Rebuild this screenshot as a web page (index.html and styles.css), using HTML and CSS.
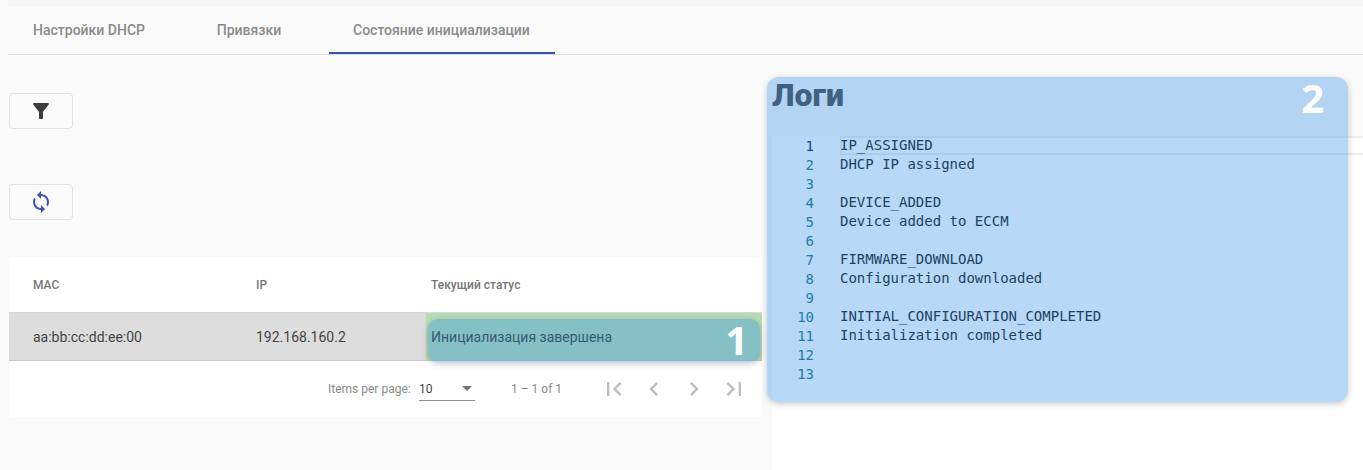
FILE: index.html
```html
<!DOCTYPE html>
<html lang="ru">
<head>
<meta charset="utf-8">
<title>DHCP</title>
<link rel="stylesheet" href="styles.css">
</head>
<body>
<div class="page">
  <div class="topstrip"></div>
  <nav class="tabs">
    <a class="tab">Настройки DHCP</a>
    <a class="tab">Привязки</a>
    <a class="tab tab-active">Состояние инициализации</a>
  </nav>
  <div class="content">
    <section class="left">
      <button class="icon-btn btn-first">
        <svg class="mi" viewBox="0 0 24 24"><path fill="#3d3d3d" d="M4.25 5.61C6.27 8.2 10 13 10 13v6c0 .55.45 1 1 1h2c.55 0 1-.45 1-1v-6s3.72-4.8 5.74-7.39c.51-.66.04-1.61-.79-1.61H5.04c-.83 0-1.3.95-.79 1.61z"/></svg>
      </button>
      <button class="icon-btn btn-second">
        <svg class="mi" viewBox="0 0 24 24"><path fill="#3f51b5" d="M12 4V1L8 5l4 4V6c3.31 0 6 2.69 6 6 0 1.01-.25 1.97-.7 2.8l1.46 1.46C19.54 15.03 20 13.57 20 12c0-4.42-3.58-8-8-8zm0 14c-3.31 0-6-2.69-6-6 0-1.01.25-1.97.7-2.8L5.24 7.74C4.46 8.97 4 10.43 4 12c0 4.42 3.58 8 8 8v3l4-4-4-4v3z"/></svg>
      </button>
      <div class="table-card">
        <div class="row head">
          <div class="cell c1">MAC</div>
          <div class="cell c2">IP</div>
          <div class="cell c3">Текущий статус</div>
        </div>
        <div class="row body">
          <div class="cell c1">aa:bb:cc:dd:ee:00</div>
          <div class="cell c2">192.168.160.2</div>
          <div class="cell c3 status">Инициализация завершена</div>
        </div>
        <div class="paginator">
          <span class="per-label">Items per page:</span>
          <span class="per-select"><span>10</span><i class="caret"></i></span>
          <span class="range">1 – 1 of 1</span>
          <span class="pg-btn"><svg viewBox="0 0 24 24"><path d="M18.41 16.59L13.82 12l4.59-4.59L17 6l-6 6 6 6zM6 6h2v12H6z"/></svg></span>
          <span class="pg-btn"><svg viewBox="0 0 24 24"><path d="M15.41 7.41L14 6l-6 6 6 6 1.41-1.41L10.83 12z"/></svg></span>
          <span class="pg-btn"><svg viewBox="0 0 24 24"><path d="M10 6L8.59 7.41 13.17 12l-4.58 4.59L10 18l6-6z"/></svg></span>
          <span class="pg-btn"><svg viewBox="0 0 24 24"><path d="M5.59 7.41L10.18 12l-4.59 4.59L7 18l6-6-6-6zM16 6h2v12h-2z"/></svg></span>
        </div>
      </div>
    </section>
    <section class="right">
      <h2 class="logs-title">Логи</h2>
      <div class="editor">
        <div class="gutter">
          <div>1</div><div>2</div><div>3</div><div>4</div><div>5</div><div>6</div><div>7</div><div>8</div><div>9</div><div>10</div><div>11</div><div>12</div><div>13</div>
        </div>
        <div class="code">
          <div class="line current">IP_ASSIGNED</div>
          <div class="line">DHCP IP assigned</div>
          <div class="line"></div>
          <div class="line">DEVICE_ADDED</div>
          <div class="line">Device added to ECCM</div>
          <div class="line"></div>
          <div class="line">FIRMWARE_DOWNLOAD</div>
          <div class="line">Configuration downloaded</div>
          <div class="line"></div>
          <div class="line">INITIAL_CONFIGURATION_COMPLETED</div>
          <div class="line">Initialization completed</div>
        </div>
      </div>
    </section>
  </div>
  <div class="callout callout-one"><span class="callout-num">1</span></div>
  <div class="callout callout-two"><span class="callout-num">2</span></div>
</div>
</body>
</html>
```
FILE: styles.css
```css
* { box-sizing: border-box; }
html, body { margin: 0; height: 100%; }
body { background: #fafafa; font-family: Roboto, "Liberation Sans", sans-serif; overflow: hidden; }
.page { position: relative; height: 470px; padding-left: 8px; }
.topstrip { height: 6px; background: #f5f5f5; }
.tabs { display: flex; height: 49px; border-bottom: 1px solid #dcdcdc; padding-left: 1px; }
.tab { min-width: 160px; padding: 0 24px; height: 48px; display: flex; align-items: center; justify-content: center; font-size: 14px; font-weight: 500; color: #8a8a8a; }
.tab-active { border-bottom: 2px solid #3f51b5; padding: 2px 25px 0 24px; }
.content { display: flex; height: 415px; margin-left: -8px; }
.left { width: 772px; flex: none; padding: 38px 10px 0 9px; }
.icon-btn { display: flex; align-items: center; justify-content: center; width: 64px; height: 36px; border: 1px solid #e0e0e0; border-radius: 4px; background: transparent; padding: 0; }
.btn-second { margin-top: 55px; }
.mi { width: 24px; height: 24px; }
.table-card { margin-top: 37px; background: #fff; }
.row { display: grid; grid-template-columns: 223px 194px 1fr; }
.head { height: 55px; font-size: 12px; font-weight: 500; color: #777; padding-top: 1px; }
.body { height: 49px; background: #ddd; border-top: 1px solid #d8d8d8; border-bottom: 1px solid #c6c6c6; font-size: 14px; color: #444; }
.cell { display: flex; align-items: center; padding-left: 24px; }
.c3 { padding-left: 5px; }
.head .c3 { padding-left: 22px; margin-left: -17px; }
.status { background: #b5dcb5; margin-left: 0; }
.paginator { height: 56px; display: flex; align-items: center; font-size: 12px; color: #8a8a8a; padding-left: 319px; }
.per-label { width: 83px; }
.per-select { margin-left: 8px; width: 56px; height: 24px; display: flex; align-items: center; justify-content: space-between; padding-right: 3px; border-bottom: 1px solid #8f8f8f; color: #444; font-size: 12px; }
.caret { width: 0; height: 0; border-left: 5px solid transparent; border-right: 5px solid transparent; border-top: 5px solid #757575; }
.range { margin-left: 36px; width: 50px; white-space: nowrap; }
.pg-btn { width: 40px; height: 40px; display: flex; align-items: center; justify-content: center; }
.range + .pg-btn { margin-left: 33px; }
.pg-btn svg { width: 28px; height: 28px; fill: #bdbdbd; }
.right { flex: 1; min-width: 0; display: flex; flex-direction: column; }
.logs-title { margin: 0; height: 81px; padding: 18px 0 0 0; font-family: Roboto, sans-serif; font-weight: 900; font-size: 32px; line-height: 44px; color: #505050; }
.editor { flex: 1; background: #fff; display: flex; font-family: "DejaVu Sans Mono", monospace; font-size: 14px; line-height: 19px; overflow: hidden; }
.gutter { width: 42px; padding-top: 1px; text-align: right; color: #237893; flex: none; }
.gutter div:first-child { color: #0b216f; }
.code { flex: 1; margin-left: 26px; margin-right: -4px; color: #222; }
.line { height: 19px; white-space: pre; }
.current { box-shadow: inset 0 0 0 2px #eee; }
.callout { position: absolute; background: rgba(30,135,228,.32); box-shadow: 0 2px 6px rgba(0,0,0,.22); }
.callout-one { left: 428px; top: 319px; width: 332px; height: 43px; border-radius: 10px; }
.callout-two { left: 767px; top: 77px; width: 581px; height: 325px; border-radius: 12px; }
.callout-num { position: absolute; color: #fff; font-family: "Open Sans", sans-serif; font-weight: 700; font-size: 40px; line-height: 44px; }
.callout-one .callout-num { right: 12px; top: -1px; }
.callout-two .callout-num { right: 24px; top: -1px; }
```
